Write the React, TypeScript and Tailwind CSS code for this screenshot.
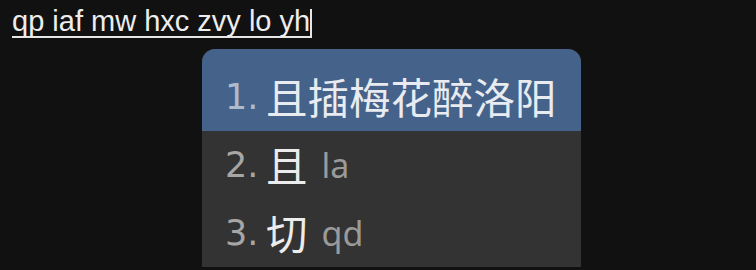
const candidates = [
  { n: 1, text: '且插梅花醉洛阳', hint: '' },
  { n: 2, text: '且', hint: 'la' },
  { n: 3, text: '切', hint: 'qd' },
];

export default function App() {
  return (
    <div className="h-[270px] w-[756px] overflow-hidden bg-[#111111]">
      <div className="flex pl-[12px] pt-[6px]">
        <span className="border-b-2 border-[#e6e6e6] text-[29px] leading-[30px] text-[#ededed] [font-family:'Liberation_Sans','Noto_Sans',sans-serif]">
          qp iaf mw hxc zvy lo yh
        </span>
        <span className="mt-[3px] h-[29px] w-[2px] bg-[#e6e6e6]" />
      </div>

      <div className="ml-[202px] mt-[11px] w-[379px] overflow-hidden rounded-t-[13px] bg-[#333333] [font-family:'Noto_Sans','Noto_Sans_CJK_SC',sans-serif]">
        {candidates.map((c, i) => {
          const active = i === 0;
          return (
            <div
              key={c.n}
              className={`flex items-center pl-[23px] ${
                active ? 'h-[82px] bg-[#45628a] pt-[14px]' : 'h-[68px]'
              }`}
            >
              <span
                className={`w-[41px] text-[35px] leading-none [font-family:'DejaVu_Sans',sans-serif] ${
                  active ? 'text-[#aebbcc]' : 'text-[#a6a6a6]'
                }`}
              >
                {c.n}.
              </span>
              <span
                className={`text-[41.5px] leading-none [font-family:'Noto_Sans_CJK_SC',sans-serif] ${
                  active ? 'text-[#e8ebf0]' : 'text-[#ececec]'
                }`}
              >
                {c.text}
              </span>
              {c.hint && (
                <span className="ml-[14px] text-[34px] leading-none text-[#9a9a9a]">{c.hint}</span>
              )}
            </div>
          );
        })}
      </div>
    </div>
  );
}
